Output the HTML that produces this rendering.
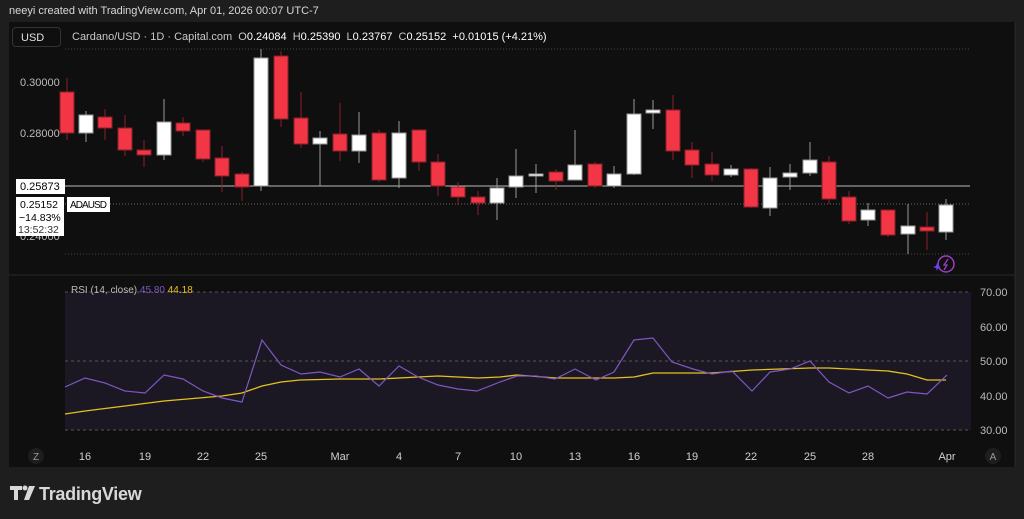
<!DOCTYPE html>
<html><head><meta charset="utf-8"><style>
html,body{margin:0;padding:0;background:#1e1e1e;width:1024px;height:519px;overflow:hidden;font-family:"Liberation Sans",sans-serif}
.t{position:absolute;white-space:nowrap}
</style></head><body>
<div style="position:absolute;left:9px;top:22px;width:1006px;height:445px;background:#0f0f0f"></div>
<div class="t" style="left:9px;top:5px;font-size:11px;color:#d8d8d8">neeyi created with TradingView.com, Apr 01, 2026 00:07 UTC-7</div>
<div class="t" style="left:12px;top:27px;height:20px;border:1px solid #333;border-radius:4px;font-size:11px;color:#e0e0e0;line-height:20px;padding-left:8px;box-sizing:border-box;width:49px">USD</div>
<div class="t" style="left:72px;top:31px;font-size:11px;color:#c8c8c8">Cardano/USD · 1D · Capital.com &nbsp;O<span style="color:#fff">0.24084</span> &nbsp;H<span style="color:#fff">0.25390</span> &nbsp;L<span style="color:#fff">0.23767</span> &nbsp;C<span style="color:#fff">0.25152</span> &nbsp;<span style="color:#fff">+0.01015 (+4.21%)</span></div>
<svg style="position:absolute;left:0;top:0" width="1024" height="519">
<line x1="65" y1="49" x2="970" y2="49" stroke="#444" stroke-dasharray="1,2"/>
<line x1="65" y1="204" x2="970" y2="204" stroke="#666" stroke-dasharray="1,2"/>
<line x1="65" y1="254" x2="970" y2="254" stroke="#444" stroke-dasharray="1,2"/>
<line x1="9" y1="275" x2="1015" y2="275" stroke="#2a2a2a"/>
<line x1="1015" y1="22" x2="1015" y2="467" stroke="#2a2a2a"/>
<line x1="65" y1="186" x2="970" y2="186" stroke="#bbb"/>
<g stroke-width="1">
<g stroke="#8b1f2a" fill="#f23645">
<line x1="67" y1="78" x2="67" y2="140"/><rect x="60" y="92" width="14" height="41"/>
<line x1="105" y1="109" x2="105" y2="140"/><rect x="98" y="117" width="14" height="11"/>
<line x1="125" y1="115" x2="125" y2="156"/><rect x="118" y="128" width="14" height="22"/>
<line x1="144" y1="140" x2="144" y2="167"/><rect x="137" y="150" width="14" height="5"/>
<line x1="183" y1="117" x2="183" y2="136"/><rect x="176" y="123" width="14" height="8"/>
<line x1="203" y1="130" x2="203" y2="162"/><rect x="196" y="130" width="14" height="29"/>
<line x1="222" y1="146" x2="222" y2="192"/><rect x="215" y="158" width="14" height="18"/>
<line x1="242" y1="172" x2="242" y2="201"/><rect x="235" y="174" width="14" height="13"/>
<line x1="281" y1="51" x2="281" y2="127"/><rect x="274" y="56" width="14" height="63"/>
<line x1="301" y1="92" x2="301" y2="148"/><rect x="294" y="118" width="14" height="26"/>
<line x1="340" y1="103" x2="340" y2="161"/><rect x="333" y="134" width="14" height="17"/>
<line x1="379" y1="130" x2="379" y2="182"/><rect x="372" y="133" width="14" height="47"/>
<line x1="419" y1="129" x2="419" y2="171"/><rect x="412" y="130" width="14" height="32"/>
<line x1="438" y1="154" x2="438" y2="196"/><rect x="431" y="162" width="14" height="24"/>
<line x1="458" y1="182" x2="458" y2="205"/><rect x="451" y="187" width="14" height="10"/>
<line x1="478" y1="191" x2="478" y2="215"/><rect x="471" y="197" width="14" height="6"/>
<line x1="556" y1="169" x2="556" y2="190"/><rect x="549" y="172" width="14" height="9"/>
<line x1="595" y1="162" x2="595" y2="188"/><rect x="588" y="164" width="14" height="22"/>
<line x1="673" y1="95" x2="673" y2="160"/><rect x="666" y="110" width="14" height="41"/>
<line x1="692" y1="142" x2="692" y2="178"/><rect x="685" y="150" width="14" height="15"/>
<line x1="712" y1="152" x2="712" y2="181"/><rect x="705" y="164" width="14" height="11"/>
<line x1="751" y1="168" x2="751" y2="208"/><rect x="744" y="169" width="14" height="38"/>
<line x1="829" y1="156" x2="829" y2="204"/><rect x="822" y="162" width="14" height="37"/>
<line x1="849" y1="191" x2="849" y2="224"/><rect x="842" y="197" width="14" height="24"/>
<line x1="888" y1="210" x2="888" y2="237"/><rect x="881" y="210" width="14" height="25"/>
<line x1="927" y1="212" x2="927" y2="250"/><rect x="920" y="227" width="14" height="4"/>
</g>
<g stroke="#999" fill="#fff">
<line x1="86" y1="111" x2="86" y2="142"/><rect x="79" y="115" width="14" height="18"/>
<line x1="164" y1="99" x2="164" y2="160"/><rect x="157" y="122" width="14" height="33"/>
<line x1="261" y1="49" x2="261" y2="191"/><rect x="254" y="58" width="14" height="128"/>
<line x1="320" y1="131" x2="320" y2="186"/><rect x="313" y="138" width="14" height="6"/>
<line x1="359" y1="112" x2="359" y2="163"/><rect x="352" y="135" width="14" height="16"/>
<line x1="399" y1="121" x2="399" y2="188"/><rect x="392" y="133" width="14" height="45"/>
<line x1="497" y1="178" x2="497" y2="220"/><rect x="490" y="188" width="14" height="15"/>
<line x1="516" y1="149" x2="516" y2="198"/><rect x="509" y="176" width="14" height="11"/>
<line x1="536" y1="164" x2="536" y2="193"/><rect x="529" y="174" width="14" height="2"/>
<line x1="575" y1="130" x2="575" y2="180"/><rect x="568" y="165" width="14" height="15"/>
<line x1="614" y1="166" x2="614" y2="188"/><rect x="607" y="174" width="14" height="12"/>
<line x1="634" y1="99" x2="634" y2="175"/><rect x="627" y="114" width="14" height="60"/>
<line x1="653" y1="100" x2="653" y2="129"/><rect x="646" y="110" width="14" height="3"/>
<line x1="731" y1="165" x2="731" y2="177"/><rect x="724" y="169" width="14" height="6"/>
<line x1="770" y1="167" x2="770" y2="216"/><rect x="763" y="178" width="14" height="30"/>
<line x1="790" y1="164" x2="790" y2="190"/><rect x="783" y="173" width="14" height="4"/>
<line x1="810" y1="142" x2="810" y2="176"/><rect x="803" y="160" width="14" height="13"/>
<line x1="868" y1="203" x2="868" y2="226"/><rect x="861" y="210" width="14" height="10"/>
<line x1="908" y1="204" x2="908" y2="254"/><rect x="901" y="226" width="14" height="8"/>
<line x1="946" y1="199" x2="946" y2="240"/><rect x="939" y="205" width="14" height="27"/>
</g></g>
<circle cx="946" cy="264" r="8" fill="none" stroke="#9c3fc0" stroke-width="1.5"/>
<path d="M948 259 L944 265 L947 265 L944 270" fill="none" stroke="#9c3fc0" stroke-width="1.3"/>
<path d="M937 263 L938 266 L941 267 L938 268 L937 271 L936 268 L933 267 L936 266Z" fill="#5b4bff"/>
<rect x="65" y="292" width="906" height="138" fill="#1b1824"/>
<g stroke="#555" stroke-dasharray="3,3"><line x1="65" y1="292" x2="971" y2="292"/><line x1="65" y1="361" x2="971" y2="361"/><line x1="65" y1="430" x2="971" y2="430"/></g>
<polyline fill="none" stroke="#e6c11d" stroke-width="1.3" points="65,414 85,411 125,406 164,401 222,396 242,393 262,386 281,382 300,380 340,379 380,379 418,377 438,376 478,378 500,377 517,375 556,378 614,378 634,377 653,373 712,373 752,370 810,368 829,368 868,370 888,371 907,374 927,380 946,380"/>
<polyline fill="none" stroke="#7e57c2" stroke-width="1.2" points="65,387 85,378 105,383 125,391 145,393 164,375 183,379 203,391 222,398 242,402 262,340 281,365 301,374 320,372 340,377 359,369 379,386 399,366 418,377 438,385 458,389 477,391 500,382 517,376 536,376 555,379 575,369 596,380 614,372 634,340 653,338 672,362 693,369 712,374 732,371 752,391 770,372 790,369 810,361 829,382 849,393 868,386 888,398 907,392 927,394 947,375"/>
<circle cx="36" cy="456" r="8" fill="#1e1e1e"/><circle cx="993" cy="456" r="8" fill="#1e1e1e"/>
<g font-family="Liberation Sans,sans-serif" font-size="10" fill="#999" text-anchor="middle"><text x="36" y="460">Z</text><text x="993" y="460">A</text></g>
<g font-family="Liberation Sans,sans-serif" font-size="11" fill="#d0d0d0" text-anchor="middle">
<text x="85" y="460">16</text><text x="145" y="460">19</text><text x="203" y="460">22</text><text x="261" y="460">25</text><text x="340" y="460">Mar</text><text x="399" y="460">4</text><text x="458" y="460">7</text><text x="516" y="460">10</text><text x="575" y="460">13</text><text x="634" y="460">16</text><text x="692" y="460">19</text><text x="751" y="460">22</text><text x="810" y="460">25</text><text x="868" y="460">28</text><text x="947" y="460">Apr</text></g>
<g font-family="Liberation Sans,sans-serif" font-size="11" fill="#bbb">
<text x="980" y="296">70.00</text><text x="980" y="331">60.00</text><text x="980" y="365">50.00</text><text x="980" y="400">40.00</text><text x="980" y="434">30.00</text>
<text x="20" y="86">0.30000</text><text x="20" y="137">0.28000</text><text x="20" y="240">0.24000</text></g>
<text x="71" y="293" font-family="Liberation Sans,sans-serif" font-size="10" fill="#bbb">RSI (14, close) <tspan fill="#7e57c2">45.80</tspan> <tspan fill="#e6c11d">44.18</tspan></text>
<rect x="16" y="179" width="49" height="15" fill="#fff"/>
<text x="20" y="190" font-family="Liberation Sans,sans-serif" font-size="11" fill="#000">0.25873</text>
<rect x="16" y="197" width="48" height="39" fill="#fff"/>
<g font-family="Liberation Sans,sans-serif" font-size="10.5" fill="#000"><text x="20" y="208">0.25152</text><text x="19" y="221">−14.83%</text><text x="18" y="233" fill="#333">13:52:32</text></g>
<rect x="67" y="197" width="43" height="15" fill="#fff"/>
<text x="70" y="208" font-family="Liberation Sans,sans-serif" font-size="10" fill="#000" textLength="37">ADAUSD</text>
<g fill="#d8d8d8"><path d="M10 486h12v4h-4v10h-4v-10h-4z"/><circle cx="25" cy="488" r="2.5"/><path d="M29 486h6l-6 14h-5z"/></g>
<text x="39" y="500" font-family="Liberation Sans,sans-serif" font-size="18" font-weight="bold" fill="#d8d8d8" letter-spacing="-0.3">TradingView</text>
</svg>
</body></html>
